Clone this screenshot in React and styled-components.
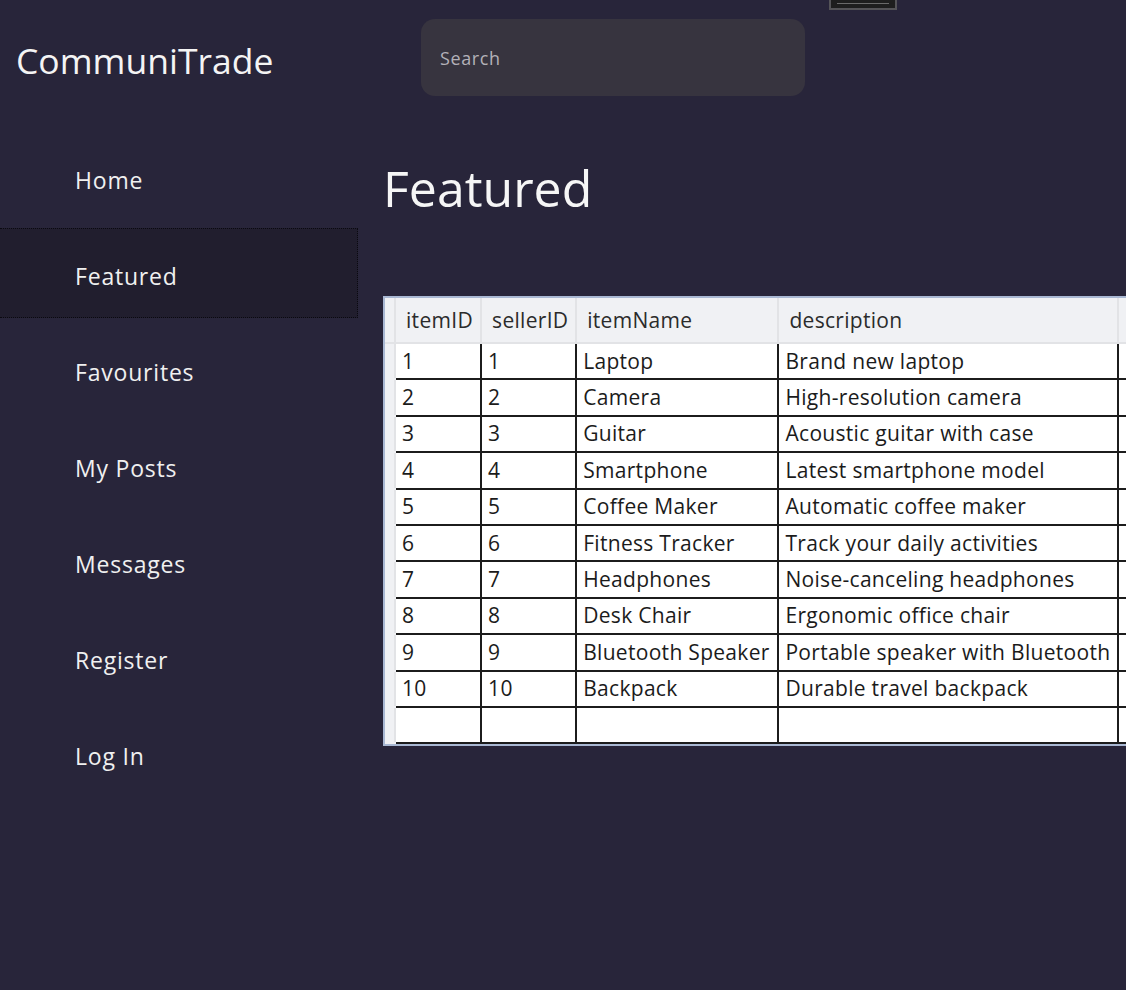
import React from 'react';
import styled, { createGlobalStyle } from 'styled-components';

const GlobalStyle = createGlobalStyle`
  html, body {
    margin: 0;
    padding: 0;
    background: #28253a;
  }
  body {
    font-family: "Open Sans", "Noto Sans", sans-serif;
  }
`;

const Page = styled.div`
  position: relative;
  width: 1126px;
  height: 990px;
  overflow: hidden;
  background: #28253a;
  color: #f2f2f2;
`;

const Header = styled.header`
  display: flex;
  align-items: flex-start;
  height: 132px;
`;

const Brand = styled.h1`
  width: 405px;
  margin: 0;
  padding: 36px 0 0 16px;
  font-size: 35.5px;
  font-weight: 400;
  color: #f4f4f4;
`;

const Search = styled.input`
  width: 384px;
  height: 77px;
  margin-top: 19px;
  box-sizing: border-box;
  padding: 0 19px;
  border: none;
  border-radius: 14px;
  background: #37343f;
  color: #ddd;
  font-family: "Open Sans", sans-serif;
  font-size: 18px;
  letter-spacing: 0.6px;
  outline: none;

  &::placeholder {
    color: #b3b1b8;
  }
`;

const WindowEdge = styled.div`
  position: absolute;
  top: 0;
  left: 829px;
  width: 68px;
  height: 10px;
  box-sizing: border-box;
  border: 2px solid #555458;
  border-top: none;
  background: #1e1e1e;

  &::after {
    content: '';
    position: absolute;
    left: 6px;
    right: 6px;
    bottom: 4px;
    height: 1px;
    background: #6a6a6a;
  }
`;

const Body = styled.div`
  display: flex;
`;

const Nav = styled.nav`
  width: 358px;
  flex-shrink: 0;
  display: flex;
  flex-direction: column;
`;

const NavItem = styled.div`
  height: 90px;
  margin-bottom: 6px;
  box-sizing: border-box;
  display: flex;
  align-items: center;
  padding: 6px 0 0 75px;
  font-size: 23px;
  letter-spacing: 0.8px;
  color: #f0f0f0;
  background: ${p => (p.$active ? '#211e2e' : 'transparent')};
  border: 1px dotted ${p => (p.$active ? '#0a0910' : 'transparent')};
  border-left: none;
`;

const Content = styled.main`
  flex: 1;
  min-width: 0;
  padding-left: 25px;
  overflow: hidden;
`;

const Heading = styled.h2`
  margin: 20px 0 0;
  height: 144px;
  font-size: 50px;
  font-weight: 400;
  line-height: 72px;
  color: #f6f6f6;
`;

const Grid = styled.div`
  width: 800px;
  border: 2px solid #a9b8d3;
  border-right: none;
  background: #fff;
`;

const Table = styled.table`
  table-layout: fixed;
  width: 860px;
  border-collapse: collapse;
  font-family: "Open Sans", "Noto Sans", sans-serif;
  font-size: 21px;
  color: #1b1b1b;
  letter-spacing: 0.3px;
`;

const HeadCell = styled.th`
  height: 44px;
  padding: 0 0 0 ${p => (p.$pad ?? 10)}px;
  text-align: left;
  font-weight: 400;
  color: #2b2b2b;
  background: #f0f1f4;
  border-right: 2px solid #e2e3e6;
  border-bottom: 2px solid #e2e3e6;
  white-space: nowrap;
  overflow: hidden;
`;

const Cell = styled.td`
  height: 34.4px;
  padding: 0 0 0 6px;
  border: 2px solid #1c1c1c;
  white-space: nowrap;
  overflow: hidden;
  line-height: 1;
`;

const RowHead = styled.td`
  padding: 0;
  background: #f0f1f4;
  border-right: 2px solid #e2e3e6;
  border-bottom: 2px solid #f0f1f4;
`;

const columns = [
  { key: 'itemID', width: 86 },
  { key: 'sellerID', width: 95 },
  { key: 'itemName', width: 202 },
  { key: 'description', width: 339 },
  { key: 'price', width: 126 },
];

const items = [
  [1, 1, 'Laptop', 'Brand new laptop'],
  [2, 2, 'Camera', 'High-resolution camera'],
  [3, 3, 'Guitar', 'Acoustic guitar with case'],
  [4, 4, 'Smartphone', 'Latest smartphone model'],
  [5, 5, 'Coffee Maker', 'Automatic coffee maker'],
  [6, 6, 'Fitness Tracker', 'Track your daily activities'],
  [7, 7, 'Headphones', 'Noise-canceling headphones'],
  [8, 8, 'Desk Chair', 'Ergonomic office chair'],
  [9, 9, 'Bluetooth Speaker', 'Portable speaker with Bluetooth'],
  [10, 10, 'Backpack', 'Durable travel backpack'],
  ['', '', '', ''],
];

const navLinks = ['Home', 'Featured', 'Favourites', 'My Posts', 'Messages', 'Register', 'Log In'];

export default function App() {
  return (
    <Page>
      <GlobalStyle />
      <WindowEdge />
      <Header>
        <Brand>CommuniTrade</Brand>
        <Search placeholder="Search" />
      </Header>
      <Body>
        <Nav>
          {navLinks.map(link => (
            <NavItem key={link} $active={link === 'Featured'}>{link}</NavItem>
          ))}
        </Nav>
        <Content>
          <Heading>Featured</Heading>
          <Grid>
            <Table>
              <colgroup>
                <col style={{ width: 10 }} />
                {columns.map(c => <col key={c.key} style={{ width: c.width }} />)}
              </colgroup>
              <thead>
                <tr>
                  <HeadCell $pad={0} />
                  {columns.map(c => (
                    <HeadCell key={c.key}>{c.key === 'price' ? '' : c.key}</HeadCell>
                  ))}
                </tr>
              </thead>
              <tbody>
                {items.map((row, i) => (
                  <tr key={i}>
                    <RowHead />
                    {row.map((v, j) => <Cell key={j}>{v}</Cell>)}
                    <Cell />
                  </tr>
                ))}
              </tbody>
            </Table>
          </Grid>
        </Content>
      </Body>
    </Page>
  );
}
